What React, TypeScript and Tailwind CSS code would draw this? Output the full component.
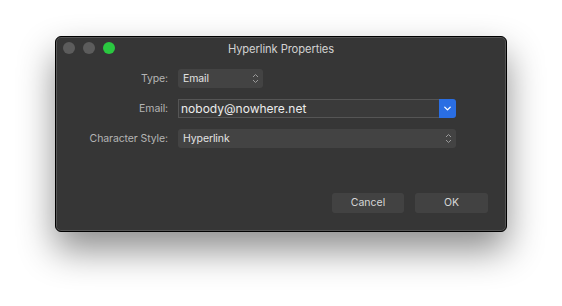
import { ChevronDown } from 'lucide-react';

function Stepper() {
  return (
    <svg width="7" height="11" viewBox="0 0 7 11" className="text-[#9a9a9a]">
      <path d="M1 4 L3.5 1.5 L6 4" fill="none" stroke="currentColor" strokeWidth="1" />
      <path d="M1 7 L3.5 9.5 L6 7" fill="none" stroke="currentColor" strokeWidth="1" />
    </svg>
  );
}

export default function App() {
  return (
    <div className="w-[562px] h-[306px] bg-white pl-[55px] pt-[36px] font-['Inter',sans-serif] overflow-hidden">
      <div className="w-[452px] h-[196px] bg-[#363636] rounded-[6px] border border-black shadow-[0_18px_36px_rgba(0,0,0,0.45)] ring-1 ring-inset ring-[#555] flex flex-col">
        {/* title bar */}
        <div className="relative h-[24px] flex items-center justify-center">
          <div className="absolute left-[7px] top-[5px] flex gap-[8px]">
            <span className="w-[12px] h-[12px] rounded-full bg-[#5c5c5c]" />
            <span className="w-[12px] h-[12px] rounded-full bg-[#5c5c5c]" />
            <span className="w-[12px] h-[12px] rounded-full bg-[#2ac840]" />
          </div>
          <span className="text-[11.2px] tracking-[-0.1px] text-[#d2d2d2] mt-[1px]">Hyperlink Properties</span>
        </div>

        {/* form */}
        <div className="grid grid-cols-[112px_1fr] gap-x-[10px] gap-y-[11px] pr-[50px] mt-[8px] text-[10.5px] tracking-[-0.1px] items-center">
          <span className="text-right text-[#b4b4b4]">Type:</span>
          <div className="w-[85px] h-[19px] bg-[#434343] rounded-[3px] flex items-center justify-between pl-[5px] pr-[4px] text-[#e2e2e2]">
            Email
            <Stepper />
          </div>

          <span className="text-right text-[#b4b4b4]">Email:</span>
          <div className="flex h-[19px]">
            <div className="flex-1 bg-[#3a3a3a] border border-[#555] border-r-0 flex items-center pl-[2px] text-[12px] tracking-normal text-[#ececec]">
              nobody@nowhere.net
            </div>
            <div className="w-[17px] bg-[#2a6ee3] rounded-r-[3px] flex items-center justify-center">
              <ChevronDown size={11} strokeWidth={3} className="text-white" />
            </div>
          </div>

          <span className="text-right text-[#b4b4b4]">Character Style:</span>
          <div className="h-[19px] bg-[#434343] rounded-[3px] flex items-center justify-between pl-[5px] pr-[4px] text-[#e2e2e2]">
            Hyperlink
            <Stepper />
          </div>
        </div>

        {/* buttons */}
        <div className="flex justify-end gap-[11px] pr-[18px] mt-auto mb-[18px] text-[10.5px] text-[#d6d6d6]">
          <button className="w-[72px] h-[20px] bg-[#424242] rounded-[3px]">Cancel</button>
          <button className="w-[73px] h-[20px] bg-[#424242] rounded-[3px]">OK</button>
        </div>
      </div>
    </div>
  );
}
